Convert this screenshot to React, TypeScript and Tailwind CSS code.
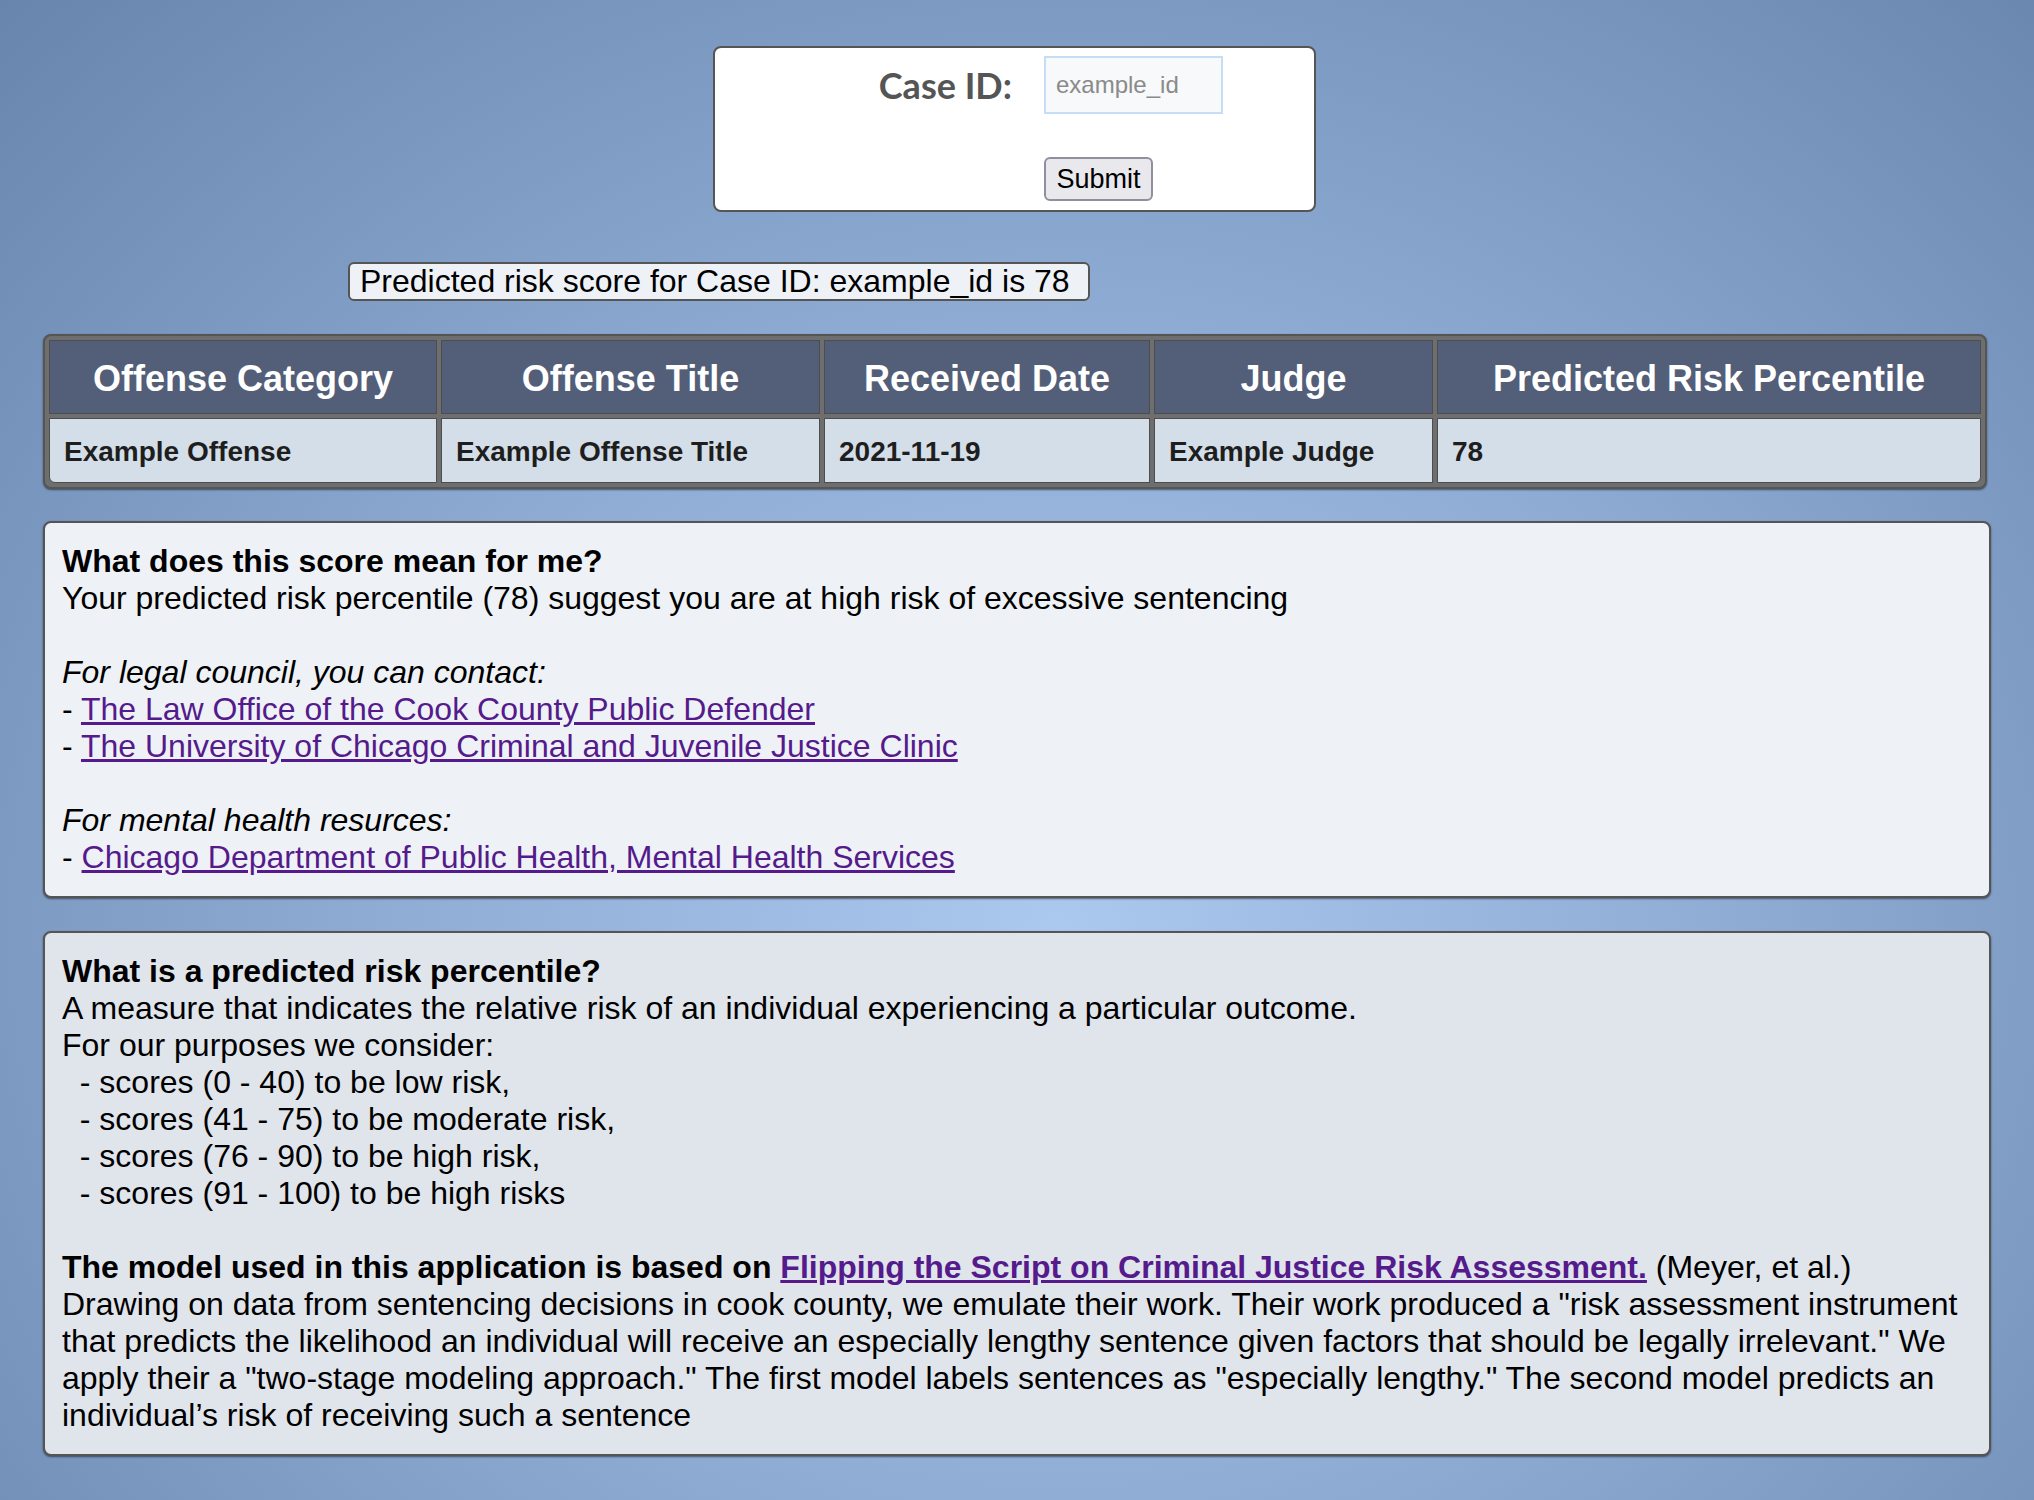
import React from "react";

const links = {
  defender: "The Law Office of the Cook County Public Defender",
  clinic: "The University of Chicago Criminal and Juvenile Justice Clinic",
  health: "Chicago Department of Public Health, Mental Health Services",
};

const columns = [
  { title: "Offense Category", value: "Example Offense", w: "w-[388px]" },
  { title: "Offense Title", value: "Example Offense Title", w: "w-[379px]" },
  { title: "Received Date", value: "2021-11-19", w: "w-[326px]" },
  { title: "Judge", value: "Example Judge", w: "w-[279px]" },
  { title: "Predicted Risk Percentile", value: "78", w: "w-[544px]" },
];

function Blank() {
  return <div className="h-[37px]" />;
}

function Link({ children, bold }: { children: React.ReactNode; bold?: boolean }) {
  return (
    <a href="#" className={`text-[#551a8b] underline ${bold ? "font-bold" : ""}`}>
      {children}
    </a>
  );
}

export default function App() {
  const caseId = "example_id";
  const score = 78;

  return (
    <div className="min-h-screen w-full bg-[radial-gradient(ellipse_at_52%_62%,#abc9ef_0%,#8eacd4_45%,#6885ae_100%)] px-[43px] pt-[46px] pb-[44px] font-['Liberation_Sans',Arial,sans-serif] text-black">
      {/* Case lookup form */}
      <div className="ml-[670px] w-[603px] rounded-[8px] border-2 border-[#555] bg-white pt-[8px] pb-[9px]">
        <div className="grid grid-cols-[297px_auto] gap-x-[32px] gap-y-[43px]">
          <label className="flex items-center justify-end font-['Lato',sans-serif] text-[36px] font-bold text-[#555]">
            Case ID:
          </label>
          <input
            placeholder="example_id"
            className="h-[58px] w-[179px] border-2 border-[#c6ddf6] bg-[#f7f9fa] px-[10px] text-[24px] placeholder:text-[#8a8a8a] outline-none"
          />
          <div />
          <button className="h-[44px] w-[109px] rounded-[6px] border-2 border-[#8f8f9d] bg-[#e9e9ed] text-[27px] leading-none">
            Submit
          </button>
        </div>
      </div>

      {/* Result banner */}
      <div className="mt-[50px] ml-[305px] inline-block rounded-[6px] border-2 border-[#555] bg-[#eef2f7] pl-[10px] pr-[18px] text-[32px] leading-[35px]">
        Predicted risk score for Case ID: {caseId} is {score}
      </div>

      {/* Case table */}
      <table className="mt-[33px] w-[1944px] table-fixed border-separate border-spacing-[4px] rounded-[8px] border-2 border-[#555] bg-[#6e6e6e] shadow-[0_1px_2px_rgba(0,0,0,0.5)]">
        <thead>
          <tr>
            {columns.map((c) => (
              <th
                key={c.title}
                className={`${c.w} h-[74px] border border-[#4d4d4d] bg-[#535e78] pt-[3px] text-center text-[36px] font-bold text-white`}
              >
                {c.title}
              </th>
            ))}
          </tr>
        </thead>
        <tbody>
          <tr>
            {columns.map((c, i) => (
              <td
                key={c.title}
                className={`h-[65px] border border-[#4d4d4d] bg-[#d4dee8] px-[14px] pt-[3px] text-left text-[28px] font-bold text-[#1e1e1e] ${
                  i === 0 ? "rounded-bl-[6px]" : ""
                } ${i === columns.length - 1 ? "rounded-br-[6px]" : ""}`}
              >
                {c.value}
              </td>
            ))}
          </tr>
        </tbody>
      </table>

      {/* What does this score mean */}
      <div className="mt-[32px] rounded-[8px] border-2 border-[#555] bg-[#eef2f6] px-[17px] pt-[20px] pb-[20px] text-[32px] leading-[37px] shadow-[0_1px_2px_rgba(0,0,0,0.5)]">
        <div className="font-bold">What does this score mean for me?</div>
        <div>Your predicted risk percentile ({score}) suggest you are at high risk of excessive sentencing</div>
        <Blank />
        <div className="italic">For legal council, you can contact:</div>
        <div>
          - <Link>{links.defender}</Link>
        </div>
        <div>
          - <Link>{links.clinic}</Link>
        </div>
        <Blank />
        <div className="italic">For mental health resurces:</div>
        <div>
          - <Link>{links.health}</Link>
        </div>
      </div>

      {/* What is a predicted risk percentile */}
      <div className="mt-[33px] rounded-[8px] border-2 border-[#555] bg-[#e0e5ec] px-[17px] pt-[20px] pb-[20px] text-[32px] leading-[37px] shadow-[0_1px_2px_rgba(0,0,0,0.5)]">
        <div className="font-bold">What is a predicted risk percentile?</div>
        <div>A measure that indicates the relative risk of an individual experiencing a particular outcome.</div>
        <div>For our purposes we consider:</div>
        <div>{"\u00a0\u00a0"}- scores (0 - 40) to be low risk,</div>
        <div>{"\u00a0\u00a0"}- scores (41 - 75) to be moderate risk,</div>
        <div>{"\u00a0\u00a0"}- scores (76 - 90) to be high risk,</div>
        <div>{"\u00a0\u00a0"}- scores (91 - 100) to be high risks</div>
        <Blank />
        <div>
          <span className="font-bold">The model used in this application is based on </span>
          <Link bold>Flipping the Script on Criminal Justice Risk Assessment.</Link> (Meyer, et al.)
        </div>
        <div>
          Drawing on data from sentencing decisions in cook county, we emulate their work. Their work produced a
          "risk assessment instrument that predicts the likelihood an individual will receive an especially lengthy
          sentence given factors that should be legally irrelevant." We apply their a "two-stage modeling approach."
          The first model labels sentences as "especially lengthy." The second model predicts an individual’s risk of
          receiving such a sentence
        </div>
      </div>
    </div>
  );
}
